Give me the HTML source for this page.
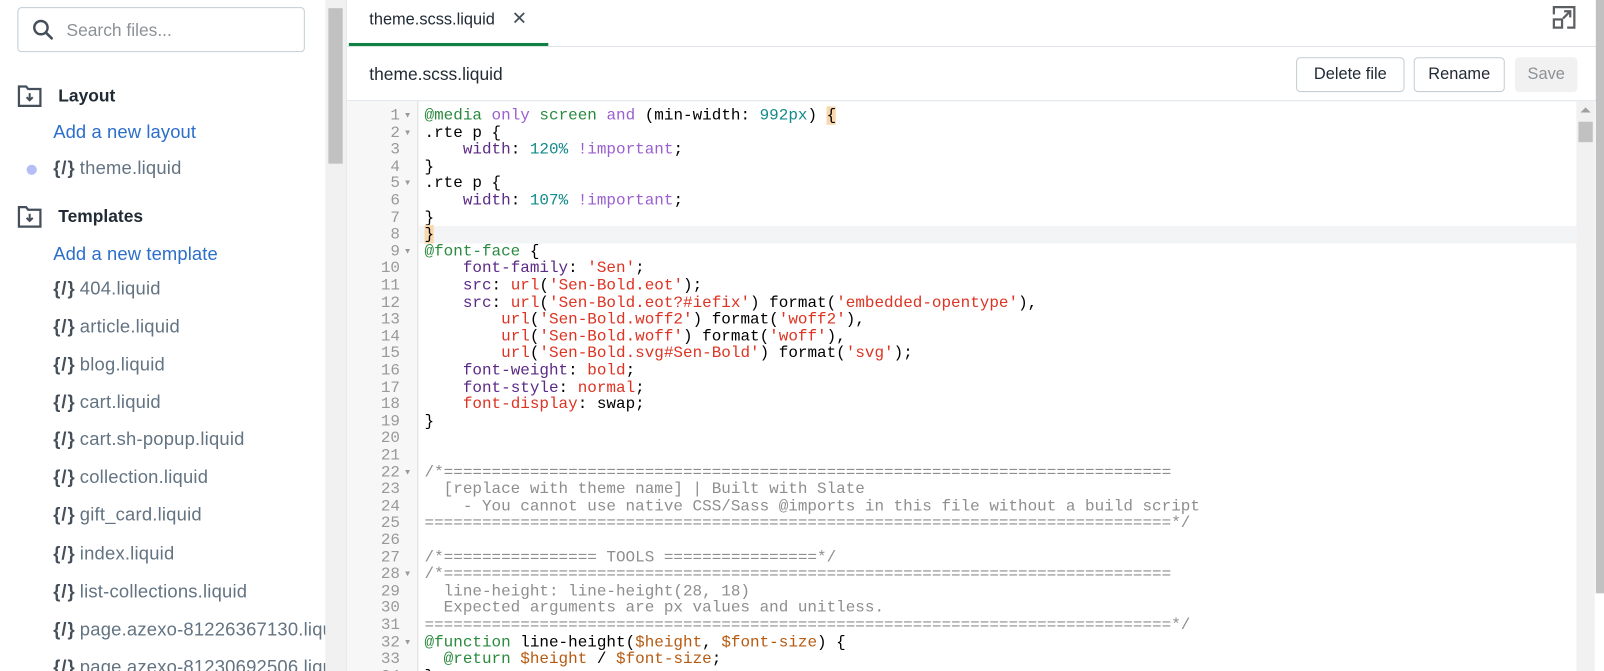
<!DOCTYPE html>
<html><head><meta charset="utf-8"><style>
*{margin:0;padding:0;box-sizing:border-box}
body{width:1604px;height:671px;overflow:hidden;background:#fff;font-family:"Liberation Sans",sans-serif;position:relative}
#wrap{position:absolute;left:0;top:0;width:1568px;height:656px;transform:scale(1.02296);transform-origin:0 0;overflow:hidden}
.side{position:absolute;left:0;top:0;width:318px;height:671px;overflow:hidden;white-space:nowrap}
.search{position:absolute;left:17px;top:7px;width:281px;height:44px;border:1px solid #c4cdd5;border-radius:4px}
.search span{position:absolute;left:47px;top:12px;font-size:17px;color:#8c9196}
.h{position:absolute;left:57px;font-size:17px;font-weight:bold;color:#212b36}
.fold{position:absolute;left:17px;width:24px;height:22px}
.add{position:absolute;left:52px;font-size:18px;color:#2c6ecb;letter-spacing:0.1px}
.f{position:absolute;left:52px;font-size:18px;color:#637381;letter-spacing:0.2px}
.f b{color:#454f5b;font-weight:bold;margin-right:4px;letter-spacing:1px}
.dot{position:absolute;left:26px;top:161px;width:10px;height:10px;border-radius:50%;background:#b4bdf5}
.sb1{position:absolute;left:318px;top:0;width:20px;height:671px;background:#f1f1f1}
.sb1 i{position:absolute;left:3px;top:8px;width:14px;height:152px;background:#c1c1c1}
.main{position:absolute;left:338px;top:0;width:1222px;height:671px;border-left:1px solid #dfe3e8}
.tab{position:absolute;left:22px;top:8px;font-size:16px;color:#212b36}
.tabline{position:absolute;left:2px;top:42px;width:195px;height:3px;background:#108043}
.hr1{position:absolute;left:0;top:45px;width:1222px;height:1px;background:#dfe3e8}
.title{position:absolute;left:22px;top:63px;font-size:17px;color:#212b36}
.btn{position:absolute;top:56px;height:34px;border:1px solid #c4cdd5;border-radius:4px;font-size:16px;color:#212b36;text-align:center;line-height:32px;background:#fff}
.hr2{position:absolute;left:0;top:98px;width:1222px;height:1px;background:#dfe3e8}
.gut{position:absolute;left:0;top:99px;width:70px;height:572px;background:#f7f7f7;border-right:1px solid #ddd}
.code{position:absolute;left:0;top:105px;width:1202px;font-family:"Liberation Mono",monospace;font-size:15.6px;line-height:16.6px;white-space:pre}
.ln{position:absolute;left:0;width:52px;text-align:right;color:#999}
.ar{position:absolute;left:57px;font-size:8px;color:#999}
.tx{position:absolute;left:76px;color:#000}
.cur{position:absolute;left:71px;width:1131px;height:17px;background:#f3f4f5}
.sb2{position:absolute;left:1202px;top:99px;width:18px;height:572px;background:#f1f1f1}
.k{color:#2a8a3e}.o{color:#9a5fd0}.n{color:#138a8a}.p{color:#5b2a86}.s{color:#dd3322}.c{color:#8e8e8e}.v{color:#b65a10}
.hl{background:#f8d8ac}
.sb3{position:absolute;left:1560px;top:0;width:8px;height:580px;background:#c1c1c1}
</style></head><body><div id="wrap">
<div class="side">
 <div class="search"><svg style="position:absolute;left:13px;top:10px" width="22" height="22" viewBox="0 0 22 22"><circle cx="9" cy="9" r="6.5" fill="none" stroke="#454f5b" stroke-width="2.4"/><path d="M14 14l5.5 5.5" stroke="#454f5b" stroke-width="2.6" stroke-linecap="round"/></svg><span>Search files...</span></div>
 <svg class="fold" style="top:83px" viewBox="0 0 24 22"><path d="M1.5 1.5h7l2 2.5h12v16.5h-21z" fill="none" stroke="#454f5b" stroke-width="2.2"/><path d="M12 8v7M9 12l3 3 3-3" fill="none" stroke="#454f5b" stroke-width="2"/></svg>
 <div class="h" style="top:84px">Layout</div>
 <div class="add" style="top:119px">Add a new layout</div>
 <div class="dot"></div>
 <div class="f" style="top:154px"><b>{/}</b>theme.liquid</div>
 <svg class="fold" style="top:201px" viewBox="0 0 24 22"><path d="M1.5 1.5h7l2 2.5h12v16.5h-21z" fill="none" stroke="#454f5b" stroke-width="2.2"/><path d="M12 8v7M9 12l3 3 3-3" fill="none" stroke="#454f5b" stroke-width="2"/></svg>
 <div class="h" style="top:202px">Templates</div>
 <div class="add" style="top:238px">Add a new template</div>
 <div class="f" style="top:272px"><b>{/}</b>404.liquid</div>
 <div class="f" style="top:309px"><b>{/}</b>article.liquid</div>
 <div class="f" style="top:346px"><b>{/}</b>blog.liquid</div>
 <div class="f" style="top:383px"><b>{/}</b>cart.liquid</div>
 <div class="f" style="top:419px"><b>{/}</b>cart.sh-popup.liquid</div>
 <div class="f" style="top:456px"><b>{/}</b>collection.liquid</div>
 <div class="f" style="top:493px"><b>{/}</b>gift_card.liquid</div>
 <div class="f" style="top:531px"><b>{/}</b>index.liquid</div>
 <div class="f" style="top:568px"><b>{/}</b>list-collections.liquid</div>
 <div class="f" style="top:605px"><b>{/}</b>page.azexo-81226367130.liquid</div>
 <div class="f" style="top:642px"><b>{/}</b>page.azexo-81230692506.liquid</div>
</div>
<div class="sb1"><i></i></div>
<div class="main">
 <div class="tab">theme.scss.liquid <span style="margin-left:12px;font-size:18px;color:#454f5b">✕</span></div>
 <div class="tabline"></div>
 <svg style="position:absolute;left:1178px;top:5px" width="24" height="24" viewBox="0 0 24 24"><path d="M2 9V2h20v20h-7" fill="none" stroke="#5c5f62" stroke-width="2.2"/><rect x="2" y="14" width="8" height="8" fill="none" stroke="#5c5f62" stroke-width="2.2"/><path d="M11 13l7-7M12 6h6v6" fill="none" stroke="#5c5f62" stroke-width="2.2"/></svg>
 <div class="hr1"></div>
 <div class="title">theme.scss.liquid</div>
 <div class="btn" style="left:928px;width:106px">Delete file</div>
 <div class="btn" style="left:1043px;width:89px">Rename</div>
 <div class="btn" style="left:1142px;width:61px;border:none;background:#f1f1f1;color:#8c9196;line-height:34px">Save</div>
 <div class="hr2"></div>
 <div class="gut"></div>
 <div class="cur" style="top:221px"></div>
 <div class="code" id="code"></div>
 <div class="sb2"><div style="position:absolute;left:4px;top:6px;border:5px solid transparent;border-bottom:5px solid #a0a0a0;border-top:0"></div><div style="position:absolute;left:2px;top:20px;width:14px;height:20px;background:#c1c1c1"></div></div>
</div>
<div class="sb3"></div>
</div>
<script>
var L=[
'<span class="k">@media</span> <span class="o">only</span> <span class="k">screen</span> <span class="o">and</span> (min-width: <span class="n">992px</span>) <span class="hl">{</span>',
'.rte p {',
'    <span class="p">width</span>: <span class="n">120%</span> <span class="o">!important</span>;',
'}',
'.rte p {',
'    <span class="p">width</span>: <span class="n">107%</span> <span class="o">!important</span>;',
'}',
'<span class="hl">}</span>',
'<span class="k">@font-face</span> {',
'    <span class="p">font-family</span>: <span class="s">\'Sen\'</span>;',
'    <span class="p">src</span>: <span class="s">url</span>(<span class="s">\'Sen-Bold.eot\'</span>);',
'    <span class="p">src</span>: <span class="s">url</span>(<span class="s">\'Sen-Bold.eot?#iefix\'</span>) format(<span class="s">\'embedded-opentype\'</span>),',
'        <span class="s">url</span>(<span class="s">\'Sen-Bold.woff2\'</span>) format(<span class="s">\'woff2\'</span>),',
'        <span class="s">url</span>(<span class="s">\'Sen-Bold.woff\'</span>) format(<span class="s">\'woff\'</span>),',
'        <span class="s">url</span>(<span class="s">\'Sen-Bold.svg#Sen-Bold\'</span>) format(<span class="s">\'svg\'</span>);',
'    <span class="p">font-weight</span>: <span class="s">bold</span>;',
'    <span class="p">font-style</span>: <span class="s">normal</span>;',
'    <span class="s">font-display</span>: swap;',
'}',
'',
'',
'<span class="c">/*'+'='.repeat(76)+'</span>',
'<span class="c">  [replace with theme name] | Built with Slate</span>',
'<span class="c">    - You cannot use native CSS/Sass @imports in this file without a build script</span>',
'<span class="c">'+'='.repeat(78)+'*/</span>',
'',
'<span class="c">/*================ TOOLS ================*/</span>',
'<span class="c">/*'+'='.repeat(76)+'</span>',
'<span class="c">  line-height: line-height(28, 18)</span>',
'<span class="c">  Expected arguments are px values and unitless.</span>',
'<span class="c">'+'='.repeat(78)+'*/</span>',
'<span class="k">@function</span> line-height(<span class="v">$height</span>, <span class="v">$font-size</span>) {',
'  <span class="k">@return</span> <span class="v">$height</span> / <span class="v">$font-size</span>;',
'}'];
var F={1:1,2:1,5:1,9:1,22:1,28:1,32:1},h='';
L.forEach(function(t,i){var y=i*16.6,n=i+1;h+='<div class="ln" style="top:'+y+'px">'+n+'</div>'+(F[n]?'<div class="ar" style="top:'+(y+1)+'px">▼</div>':'')+'<div class="tx" style="top:'+y+'px">'+t+'</div>';});
document.getElementById('code').innerHTML=h;
</script>
</body></html>
